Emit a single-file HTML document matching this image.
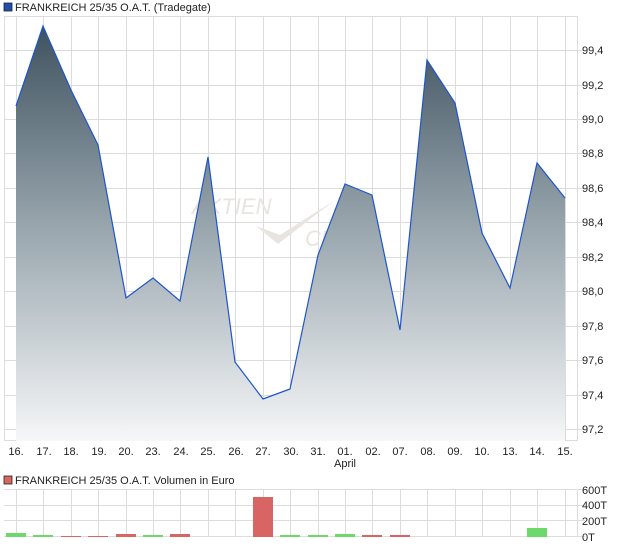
<!DOCTYPE html>
<html><head><meta charset="utf-8"><style>
body{margin:0;background:#fff;width:620px;height:546px;overflow:hidden;font-family:"Liberation Sans",sans-serif;}
svg{display:block}
text{font-family:"Liberation Sans",sans-serif;font-size:11px;fill:#222}
</style></head><body>
<svg width="620" height="546" viewBox="0 0 620 546">
<defs>
<linearGradient id="g" x1="0" y1="26" x2="0" y2="441" gradientUnits="userSpaceOnUse">
<stop offset="0" stop-color="#3e525f"/>
<stop offset="0.5" stop-color="#9ba8b0"/>
<stop offset="1" stop-color="#f6f7f8"/>
</linearGradient>
</defs>
<rect x="4" y="3" width="8" height="8" fill="#1f4fae" stroke="#222" stroke-width="0.8"/>
<text x="15" y="11">FRANKREICH 25/35 O.A.T. (Tradegate)</text>
<g stroke="#dcdcdc" stroke-width="1" fill="none">
<rect x="4.5" y="16.5" width="573" height="424"/>
<path d="M4 50.5H585M4 85.5H585M4 119.5H585M4 153.5H585M4 188.5H585M4 222.5H585M4 257.5H585M4 291.5H585M4 326.5H585M4 360.5H585M4 395.5H585M4 429.5H585"/>
<path d="M16.5 17V441M43.5 17V441M71.5 17V441M98.5 17V441M126.5 17V441M153.5 17V441M180.5 17V441M208.5 17V441M235.5 17V441M263.5 17V441M290.5 17V441M318.5 17V441M345.5 17V441M372.5 17V441M400.5 17V441M427.5 17V441M455.5 17V441M482.5 17V441M510.5 17V441M537.5 17V441M565.5 17V441"/>
</g>
<text x="192" y="214" style="font-size:22px;font-style:italic;fill:#e8e4df">AKTIEN</text>
<text x="305" y="246" style="font-size:22px;font-style:italic;fill:#e8e4df">CHECK</text>
<path d="M256 226 L278 244 L335 200 L280 235 Z" fill="#e8e4df"/>
<path d="M16,106 L43,26 L71,90 L98,145 L126,298 L153,278 L180,301 L208,157 L235,362 L263,399 L290,389 L318,255 L345,184 L372,195 L400,330 L427,60 L455,103 L482,233 L510,288 L537,163 L565,198 L565,441 L16,441 Z" fill="url(#g)"/>
<path d="M16,106 L43,26 L71,90 L98,145 L126,298 L153,278 L180,301 L208,157 L235,362 L263,399 L290,389 L318,255 L345,184 L372,195 L400,330 L427,60 L455,103 L482,233 L510,288 L537,163 L565,198" fill="none" stroke="#1f55c8" stroke-width="1.2"/>
<g>
<text x="582" y="54">99,4</text><text x="582" y="89">99,2</text><text x="582" y="123">99,0</text><text x="582" y="157">98,8</text><text x="582" y="192">98,6</text><text x="582" y="226">98,4</text><text x="582" y="261">98,2</text><text x="582" y="295">98,0</text><text x="582" y="330">97,8</text><text x="582" y="364">97,6</text><text x="582" y="399">97,4</text><text x="582" y="433">97,2</text>
</g>
<g text-anchor="middle">
<text x="16" y="455">16.</text><text x="44" y="455">17.</text><text x="71" y="455">18.</text><text x="99" y="455">19.</text><text x="126" y="455">20.</text><text x="153" y="455">23.</text><text x="181" y="455">24.</text><text x="208" y="455">25.</text><text x="236" y="455">26.</text><text x="263" y="455">27.</text><text x="291" y="455">30.</text><text x="318" y="455">31.</text><text x="345" y="455">01.</text><text x="373" y="455">02.</text><text x="400" y="455">07.</text><text x="428" y="455">08.</text><text x="455" y="455">09.</text><text x="482" y="455">10.</text><text x="510" y="455">13.</text><text x="537" y="455">14.</text><text x="565" y="455">15.</text>
<text x="345" y="467">April</text>
</g>
<rect x="4" y="476" width="8" height="8" fill="#d96464" stroke="#222" stroke-width="0.8"/>
<text x="15" y="484">FRANKREICH 25/35 O.A.T. Volumen in Euro</text>
<g stroke="#dcdcdc" stroke-width="1" fill="none">
<path d="M4 489.5H585M4 505.5H585M4 520.5H585M4 536.5H585M577.5 489V537"/>
<path d="M16.5 489V537M43.5 489V537M71.5 489V537M98.5 489V537M126.5 489V537M153.5 489V537M180.5 489V537M208.5 489V537M235.5 489V537M263.5 489V537M290.5 489V537M318.5 489V537M345.5 489V537M372.5 489V537M400.5 489V537M427.5 489V537M455.5 489V537M482.5 489V537M510.5 489V537M537.5 489V537M565.5 489V537"/>
</g>
<g>
<rect x="6" y="533" width="20" height="4" fill="#6cd96a"/>
<rect x="33" y="535" width="20" height="2" fill="#6cd96a"/>
<rect x="61" y="536" width="20" height="1" fill="#d96464"/>
<rect x="88" y="536" width="20" height="1" fill="#d96464"/>
<rect x="116" y="534" width="20" height="3" fill="#d96464"/>
<rect x="143" y="535" width="20" height="2" fill="#6cd96a"/>
<rect x="170" y="534" width="20" height="3" fill="#d96464"/>
<rect x="253" y="497" width="20" height="40" fill="#d96464"/>
<rect x="280" y="535" width="20" height="2" fill="#6cd96a"/>
<rect x="308" y="535" width="20" height="2" fill="#6cd96a"/>
<rect x="335" y="534" width="20" height="3" fill="#6cd96a"/>
<rect x="362" y="535" width="20" height="2" fill="#d96464"/>
<rect x="390" y="535" width="20" height="2" fill="#d96464"/>
<rect x="527" y="528" width="20" height="9" fill="#6cd96a"/>
</g>
<text x="582" y="494">600T</text><text x="582" y="509">400T</text><text x="582" y="525">200T</text><text x="582" y="541">0T</text>
</svg>
</body></html>
